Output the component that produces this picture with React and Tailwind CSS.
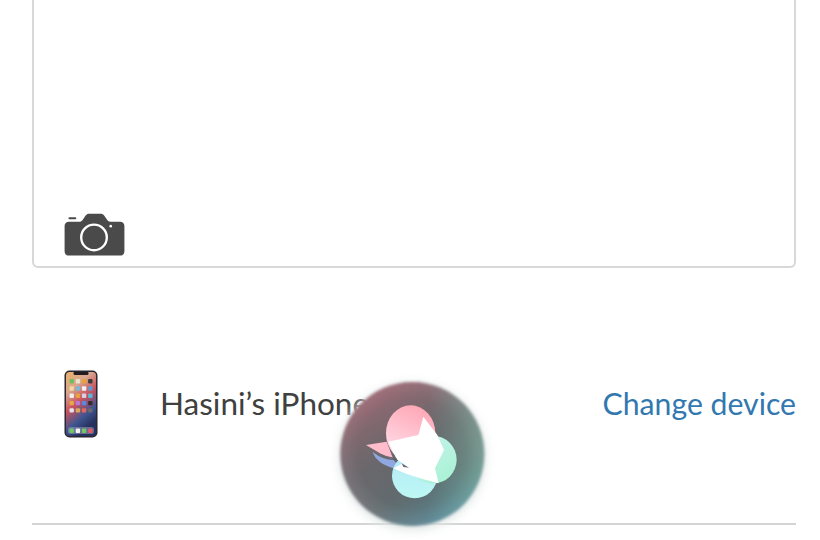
import React from 'react';

function CameraIcon() {
  return (
    <svg width="61" height="44" viewBox="0 0 62 44" className="block">
      <path fill="#4a4a4a" d="M5 8.5h10.5c1.5 0 2.6-.6 3.4-1.8L22 2.2C23 .8 24 .3 25.6.3h11.6c1.6 0 2.700.6 3.600 1.900l3 4.400c.8 1.300 1.900 1.900 3.400 1.900h9.800c2.800 0 4.400 1.600 4.400 4.400v25.600c0 2.800-1.600 4.400-4.400 4.400H5c-2.800 0-4.400-1.600-4.400-4.400V12.900C.6 10.100 2.200 8.500 5 8.500z" />
      <rect x="4.500" y="4" width="8" height="2" rx="1" fill="#4a4a4a" />
      <circle cx="30.500" cy="24.500" r="13" fill="none" stroke="#fff" strokeWidth="2.400" />
      <circle cx="47.500" cy="13" r="1.300" fill="#fff" />
    </svg>
  );
}

const appColors = [
  '#6fbf5f', '#e9e2d0', '#e8a23c', '#3d3a38',
  '#f0d9a0', '#7fb6d8', '#f1f1f1', '#5c9bd6',
  '#eeeeee', '#e8a23c', '#d6d0e0', '#5fb6d6',
  '#e8a84c', '#b878d8', '#5c88e0', '#3a2a2a',
  '#e8e2e8', '#d8a860', '#e06a5a', '#6a6a70',
];

function PhoneIcon() {
  return (
    <svg width="34" height="68" viewBox="0 0 34 68" className="block">
      <defs>
        <linearGradient id="wall" x1="0" y1="0" x2="0.4" y2="1">
          <stop offset="0" stopColor="#e9b26a" />
          <stop offset="0.3" stopColor="#d9a58e" />
          <stop offset="0.55" stopColor="#c8525e" />
          <stop offset="0.8" stopColor="#3f5590" />
          <stop offset="1" stopColor="#26305c" />
        </linearGradient>
        <filter id="soft"><feGaussianBlur stdDeviation="0.35" /></filter>
      </defs>
      <g filter="url(#soft)">
        <rect x="0.500" y="0.500" width="33" height="67" rx="5" fill="#2c2630" />
        <rect x="2" y="2" width="30" height="64" rx="3.500" fill="url(#wall)" />
        <rect x="9.500" y="1.500" width="15" height="3.500" rx="1.500" fill="#221c22" />
        {appColors.map((color, i) => (
          <rect key={i} x={5.500 + (i % 4) * 6.200} y={9 + Math.floor(i / 4) * 7.300} width="4.400" height="4.400" rx="1" fill={color} />
        ))}
        <rect x="4" y="57" width="26" height="7" rx="2.500" fill="#8f93b8" opacity="0.6" />
        {['#6fc765', '#f2f2f2', '#6fc765', '#e2586a'].map((color, i) => (
          <rect key={i} x={5.500 + i * 6.200} y="58.500" width="4.400" height="4.400" rx="1" fill={color} />
        ))}
      </g>
    </svg>
  );
}

function SiriOrb() {
  return (
    <svg width="180" height="175" viewBox="0 0 540 525" className="absolute left-[320px] top-[365px]">
      <defs>
        <radialGradient id="body" cx="277" cy="267" r="216" gradientUnits="userSpaceOnUse">
          <stop offset="0" stopColor="#62666a" />
          <stop offset="0.75" stopColor="#66686b" />
          <stop offset="1" stopColor="#77767a" />
        </radialGradient>
        <linearGradient id="tint" x1="0.200" y1="0" x2="0.750" y2="1">
          <stop offset="0" stopColor="#d06a7c" stopOpacity="0.6" />
          <stop offset="0.45" stopColor="#a06070" stopOpacity="0.08" />
          <stop offset="0.7" stopColor="#3c8a90" stopOpacity="0.1" />
          <stop offset="1" stopColor="#4fb0d0" stopOpacity="0.55" />
        </linearGradient>
        <linearGradient id="sideTint" x1="0" y1="0.500" x2="1" y2="0.500">
          <stop offset="0.6" stopColor="#7ad0b0" stopOpacity="0" />
          <stop offset="1" stopColor="#8ae0c0" stopOpacity="0.35" />
        </linearGradient>
        <linearGradient id="pinkLobe" x1="0.700" y1="0" x2="0.300" y2="1">
          <stop offset="0" stopColor="#ffa6b4" />
          <stop offset="1" stopColor="#ffe0ec" />
        </linearGradient>
        <linearGradient id="cyanLobe" x1="0.500" y1="0" x2="0.500" y2="1">
          <stop offset="0" stopColor="#b4e8f6" />
          <stop offset="1" stopColor="#bdf8f4" />
        </linearGradient>
        <linearGradient id="greenLobe" x1="0.200" y1="0" x2="0.800" y2="1">
          <stop offset="0" stopColor="#c6f2ec" />
          <stop offset="1" stopColor="#a8f2d4" />
        </linearGradient>
        <filter id="orbSoft"><feGaussianBlur stdDeviation="2" /></filter>
        <filter id="orbBlur"><feGaussianBlur stdDeviation="4" /></filter>
        <filter id="glow" x="-30%" y="-30%" width="160%" height="160%"><feGaussianBlur stdDeviation="16" /></filter>
      </defs>
      <circle cx="277" cy="272" r="226" fill="#ffffff" opacity="0.7" filter="url(#glow)" />
      <circle cx="277" cy="275" r="218" fill="#9fb0b0" opacity="0.35" filter="url(#glow)" />
      <g filter="url(#orbBlur)">
        <circle cx="277" cy="267" r="216" fill="url(#body)" />
        <circle cx="277" cy="267" r="216" fill="url(#tint)" />
        <circle cx="277" cy="267" r="216" fill="url(#sideTint)" />
      </g>
      <g filter="url(#orbSoft)">
        <path fill="#8fa8e0" d="M158 260C175 275 195 283 220 285L232 298L220 310C190 300 165 285 158 260Z" />
        <circle cx="284" cy="332" r="68" fill="url(#cyanLobe)" />
        <circle cx="338" cy="284" r="72" fill="url(#greenLobe)" />
        <ellipse cx="272" cy="205" rx="74" ry="84" fill="url(#pinkLobe)" />
        <path fill="#fff" d="M310 155L352 210L372 255L345 310L356 355L310 343L260 327L220 310L245 297L267 308L230 283L205 230L295 210Z" />
        <path fill="#ffbccb" d="M138 240L200 230L220 283L180 265Z" />
        <path fill="#5f6270" d="M195 272L232 288L230 280Z" />
        <path fill="#6a6c78" d="M245 295L267 308L250 306Z" />
      </g>
    </svg>
  );
}

export default function App() {
  return (
    <div className="relative w-[820px] h-[540px] overflow-hidden bg-white font-['Lato',sans-serif]">
      <div className="pl-8 pr-6 flex flex-col">
        <div className="h-[268px] border-x-2 border-b-2 border-[#d8d8d8] rounded-b-md flex items-end pl-[30px] pb-[9px]">
          <CameraIcon />
        </div>
        <div className="mt-[102px] flex items-center pl-[32px] h-[68px]">
          <PhoneIcon />
          <span className="ml-[62px] text-[31.5px] text-[#404040]">Hasini’s iPhone</span>
          <span className="ml-auto text-[30.2px] text-[#3278b0]">Change device</span>
        </div>
        <div className="mt-[85px] h-[2px] bg-[#d4d4d4]" />
      </div>
      <SiriOrb />
    </div>
  );
}
